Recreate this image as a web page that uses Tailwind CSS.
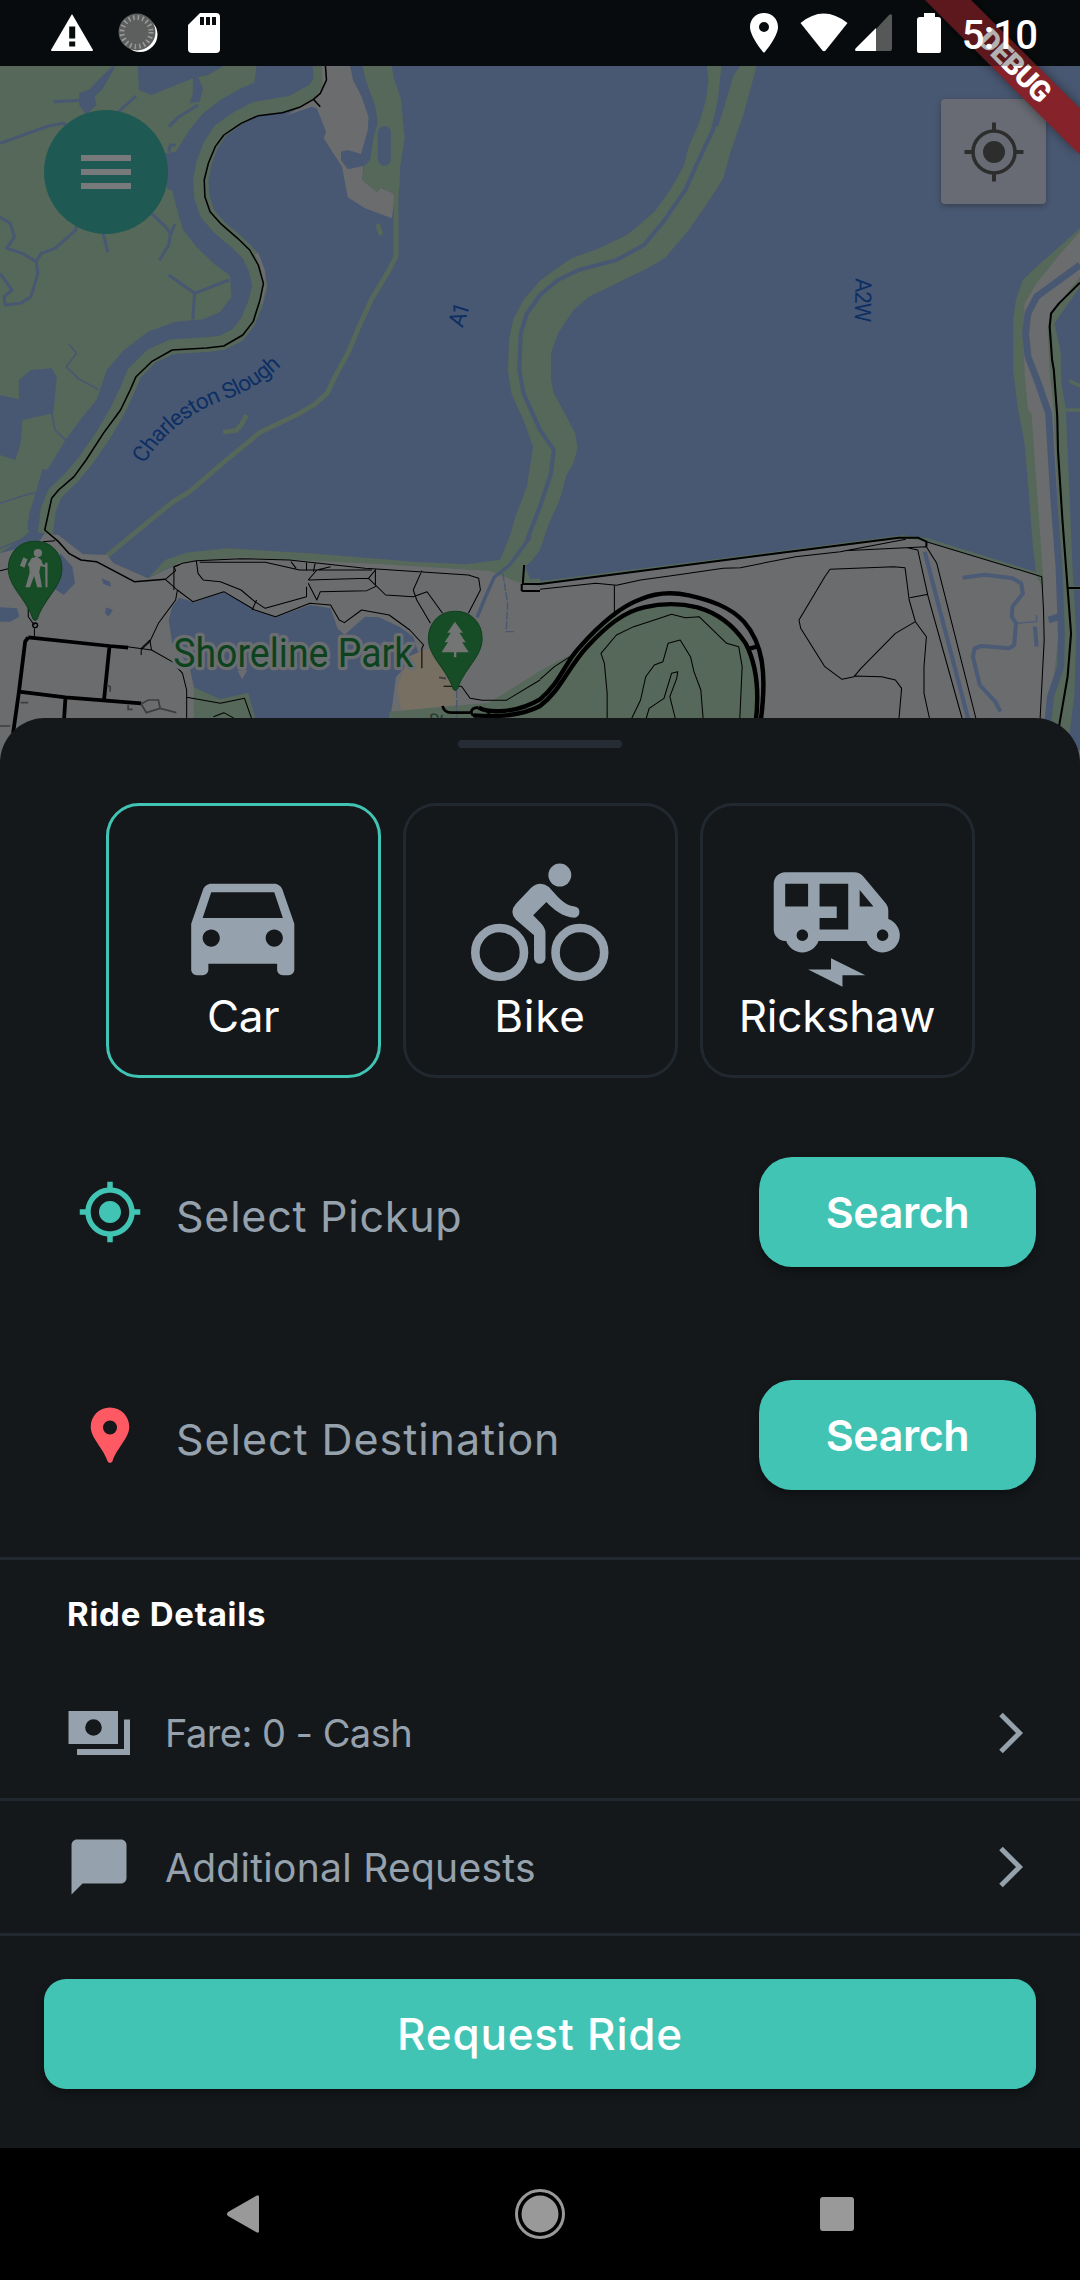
<!DOCTYPE html>
<html lang="en">
<head>
<meta charset="utf-8">
<title>Request Ride</title>
<script src="https://cdn.jsdelivr.net/npm/@tailwindcss/browser@4"></script>
</head>
<body class="bg-black">
<div class="relative flex h-[2280px] w-[1080px] flex-col overflow-hidden bg-[#0c1113] font-['Inter',sans-serif] text-white">

  <!-- Status bar -->
  <header class="relative z-20 flex h-[66px] shrink-0 items-center bg-black/30 pl-[50px]">
    <svg class="h-[40px] w-[44px]" viewBox="0 0 44 40"><path fill="#fff" d="M22 1 43 37q0 1-1 1H2q-1 0-1-1Z"/><path fill="#080c0d" d="M19.2 13.5h6v12h-6zM19.2 28.500h6v5h-6z"/></svg>
    <svg class="ml-[24px] h-[42px] w-[40px]" viewBox="0 0 40 42"><circle cx="22" cy="22.500" r="17.500" fill="#fff"/><circle cx="19" cy="20" r="18.500" fill="#5d5e5e"/><circle cx="18.500" cy="20" r="14.500" fill="none" stroke="#999" stroke-width="5" stroke-dasharray="1.600 3"/></svg>
    <svg class="ml-[30px] h-[42px] w-[32px]" viewBox="0 0 32 42"><path fill="#fff" d="M12 1h16q4 0 4 4v32q0 4-4 4H4q-4 0-4-4V13Z"/><path fill="#080c0d" d="M12 5h4v8h-4zM18 5h4v8h-4zM24 5h4v8h-4z"/></svg>
    <div class="ml-auto flex items-center pr-[43px]">
      <svg class="h-[42px] w-[28px]" viewBox="0 0 28 42"><path fill="#fff" fill-rule="evenodd" d="M14 1C6 1 0 7 0 15c0 10 14 26 14 26s14-16 14-26C28 7 22 1 14 1Zm0 9a5 5 0 1 1 0 10 5 5 0 0 1 0-10Z"/></svg>
      <svg class="ml-[22px] h-[40px] w-[48px]" viewBox="0 0 48 40"><path fill="#fff" d="M.500 10Q23.500-9 47.500 10L26 37q-2 2.500-4 0Z"/></svg>
      <svg class="ml-[7px] h-[40px] w-[38px]" viewBox="0 0 38 40"><path fill="#565857" d="M21 16 34 2q3-2 3 1v33q0 2-2 2H21Z"/><path fill="#fff" d="M21 15v23H1q-2-1 0-3Z"/></svg>
      <svg class="ml-[24px] h-[42px] w-[24px]" viewBox="0 0 24 42"><path fill="#fff" d="M7 1h11v4h3q3 0 3 3v31q0 2-2 2H2q-2 0-2-2V8q0-3 3-3h4Z"/></svg>
      <span class="ml-[21px] pt-[5px] font-['Roboto',sans-serif] text-[40px] leading-none font-medium tracking-[-0.9px]">5:10</span>
    </div>
  </header>

  <!-- Debug ribbon -->
  <svg class="absolute top-0 right-0 z-10 h-[170px] w-[180px]" viewBox="900 0 180 170">
    <defs><filter id="sh" x="-20%" y="-20%" width="140%" height="140%"><feGaussianBlur stdDeviation="6"/></filter></defs>
    <path d="M925 0h46l109 108.500V155Z" fill="#000" opacity=".45" filter="url(#sh)"/>
    <path d="M925 0h46l109 108.500V155Z" fill="#86232a"/>
    <text transform="translate(1015 66) rotate(45)" y="10" text-anchor="middle" textLength="89" font-family="Roboto, sans-serif" font-weight="900" font-size="29" fill="#fff">DEBUG</text>
  </svg>

  <!-- Map -->
  <section class="relative h-[652px] shrink-0">
    <svg class="block h-[700px] w-[1080px]" viewBox="0 198 3136 2100" preserveAspectRatio="none" font-family="Roboto, sans-serif">
      <rect y="198" width="3136" height="2100" fill="#495872"/>
      <!-- marsh -->
      <path fill="#566859" d="M0 198H400L403 270 440 285 560 235 605 225 650 198H745L738 248 690 270 640 300 590 340 550 390 510 455 480 460 485 567 500 572 520 650 532 690 570 740 620 790 668 828 672 890 640 935 590 958 510 965 430 995 360 1050 310 1110 300 1140 280 1200 240 1250 190 1320 120 1440 115 1490 80 1570 85 1600 0 1660Z"/>
      <path fill="#495872" d="M0 1185 55 1198 55 1140 90 1110 150 1105 165 1130 155 1240 65 1260 60 1330 45 1380 0 1365Z"/>
      <path fill="#495872" d="M230 280 260 268 290 235 325 200 335 198 300 265 275 290 280 315 250 345 230 315ZM560 235 575 232 590 265 580 305 550 310 560 280Z"/>
      <g fill="none" stroke="#495872" stroke-width="9" stroke-linejoin="round">
        <path d="M0 430 140 378 185 370 230 420M250 340V300L155 305M395 288 350 330 320 370M575 315 520 350 490 380M0 652 30 670 42 710 20 745 65 760 105 785 110 820 90 890 60 910 15 915 12 890 35 870 0 820M105 785 120 760 160 745 220 690 225 660M300 700 313 757M490 825 565 880 665 840M565 880 560 958M440 640 480 680 495 700 490 735 463 780M508 672 495 705M510 435H495L490 455"/>
        <path stroke-width="5" d="M200 1032 222 1060 192 1100 230 1138 285 1168M150 1240 160 1290 190 1320 215 1350M0 1510 90 1480 110 1480M0 1645 60 1620 105 1580"/>
      </g>
      <path fill="none" stroke="#495872" stroke-width="24" d="M135 1410 110 1500 97 1540 92 1590"/>
      <!-- slough levee -->
      <path fill="none" stroke="#566859" stroke-width="44" stroke-linejoin="round" d="M930 198 933 240 915 270 850 308 740 328 690 355 640 392 612 435 592 490 583 540 586 590 602 640 635 680 690 728 725 765 745 810 755 860 742 910 720 965 690 1005 645 1028 600 1034 500 1040 440 1068 390 1120 370 1170 340 1235 300 1305 250 1380 210 1430 160 1480 140 1530 132 1600"/>
      <path fill="none" stroke="#6b6c6e" stroke-width="10" d="M745 760 764 810 767 860 757 910"/>
      <path fill="#6b6c6e" d="M935 198H1017L1025 240 1050 290 1070 350 1068 390 1048 462 1010 450 990 455 990 480 1010 508 1055 498 1052 540 1095 577 1105 563 1147 582 1138 655 1060 625 1010 592 993 500 940 415 947 395 920 325 905 320 830 347 910 298 937 260Z"/>
      <path fill="#566859" d="M1053 198H1137L1145 240 1165 300 1168 340 1175 415 1162 500 1160 560 1150 640 1147 582 1105 563 1095 577 1052 540 1057 498 1075 480 1085 410 1097 370 1090 320 1062 240ZM1090 675 1102 668 1113 703 1100 708Z"/>
      <rect x="1097" y="378" width="38" height="119" rx="19" fill="#495872"/>
      <path fill="none" stroke="#566859" stroke-width="14" stroke-linejoin="round" d="M1150 560V770L1130 810 1080 895 1040 985 1010 1060 975 1125 950 1180 915 1212 870 1240 755 1297 640 1395 550 1475 500 1507 310 1668M648 1296 685 1292 700 1275 716 1245"/>
      <!-- middle creek -->
      <path fill="#566859" d="M2053 198H2197L2160 340 2120 460 2100 535 2060 600 2000 690 1930 775 1880 805 1780 855 1710 890 1665 930 1620 1000 1600 1060 1600 1140 1608 1180 1640 1240 1670 1300 1677 1345 1665 1390 1645 1425 1625 1500 1590 1580 1568 1650 1530 1700 1500 1760 1400 1740 1350 1693 1450 1685 1480 1610 1500 1540 1530 1460 1548 1340 1520 1260 1485 1180 1475 1110 1478 1020 1490 960 1520 900 1568 842 1610 810 1660 775 1740 745 1820 705 1850 680 1900 635 1940 580 1985 500 2000 440 2030 370 2050 300 2057 240Z"/>
      <path fill="#495872" d="M2095 198H2150L2130 225 2112 290 2085 380H2068L2084 300Z"/>
      <path fill="none" stroke="#495872" stroke-width="12" stroke-linejoin="round" d="M2085 330 2070 390 2020 500 1990 570 1930 660 1870 735 1790 780 1680 810 1620 840 1568 885 1530 940 1512 1000 1508 1110 1520 1180 1568 1290 1608 1350 1600 1420 1568 1520 1530 1620"/>
      <!-- mainland -->
      <path fill="#6b6c6e" d="M0 1660 110 1630 130 1600 170 1605 240 1662 310 1665 330 1690 430 1735 500 1700 540 1670 700 1665 1100 1690 1420 1712 1568 1755 2620 1613 2690 1622 3020 1728 3136 1750V2300H0Z"/>
      <path fill="#566859" d="M430 1735 480 1680 540 1658 660 1645 900 1660 1200 1685 1350 1693 1450 1680 1530 1660 1568 1700V1760L1500 1745 1420 1712 1100 1692 700 1672 520 1688Z"/>
      <path fill="#495872" d="M1525 1700 1568 1660V1735L1540 1738Z"/>
      <path fill="none" stroke="#566859" stroke-width="8" d="M1568 1748 2620 1610 2690 1618 3020 1724"/>
      <path fill="#495872" d="M175 1660 210 1700 218 1750 185 1785 150 1760ZM295 1735 320 1745 322 1760 300 1752ZM308 1822 328 1830 315 1850 305 1840ZM0 1822 50 1825 56 1850 30 1865 0 1865Z"/>
      <path fill="#495872" d="M490 1860 500 1820 520 1793 565 1807 650 1777 700 1805 740 1832 800 1852 900 1815 960 1825 980 1885 1000 1905 1060 1850 1100 1852 1160 1880 1200 1910 1215 1960 1150 2030 1140 2110 1130 2170H745L720 2080 640 2100 565 2070 550 2000 500 1930Z"/>
      <path fill="#6b6c6e" d="M690 2012 718 2010 703 2038Z"/>
      <path fill="#786f63" d="M1245 1945 1185 1970 1155 2060 1165 2132 1330 2115V2060Z"/>
      <path fill="#566859" d="M563 2062 640 2098 720 2078 745 2170H563ZM1130 2135 1420 2108 1568 2013 1660 1962 1780 1850 1880 1822 1990 1815 2080 1845 2160 1920 2190 2000 2200 2170H1130Z"/>
      <path fill="none" stroke="#495872" stroke-width="10" d="M1540 1610 1480 1695 1435 1732 1410 1790 1385 1852"/>
      <path fill="none" stroke="#495872" stroke-width="4" d="M1460 1720 1474 1810 1470 1895H1495M1326 2070V2160" stroke-dasharray="24 5"/>
      <!-- east channel -->
      <path fill="#566859" d="M3136 685 3065 750 3010 800 2970 840 2950 900 2942 960V1110L2955 1220 2975 1330 2985 1450 3000 1650 3010 1730 3050 1800 3050 2250H3136Z"/>
      <path fill="#6b6c6e" d="M3136 695 3080 760 3010 850 2975 910 2970 1000 2976 1130 2985 1230 2995 1240 3020 1600 3030 1750 3010 2250 3045 2160 3075 1900 3077 1650 3060 1230 3048 1120 3042 980 3060 930 3136 830Z"/>
      <path fill="#495872" d="M3136 860 3062 970 3080 1060 3082 1150 3095 1230 3115 1720 3125 1900 3120 2080 3100 2250H3136Z"/>
      <path fill="none" stroke="#566859" stroke-width="10" d="M3092 1230H3136M3105 1142 3136 1158M3110 1764H3136"/>
      <path fill="none" stroke="#495872" stroke-width="20" stroke-linejoin="round" d="M3136 795 3010 890 2985 940 2978 1000 2985 1070 3015 1150 3045 1240 3060 1500 3075 1700 3082 1900 3080 2000 3050 2090 3040 2200M3045 1860 3075 1850"/>
      <g fill="none" stroke="#4c5b75" stroke-width="12" stroke-linejoin="round">
        <path d="M2685 1655 2812 2160M2795 1733 2860 1724 2940 1735 2965 1750 2970 1780 2940 1820 2938 1850 2950 1870 2945 1935 2930 1945 2850 1938 2830 1945 2825 1970 2845 2055 2890 2105 2905 2135M3005 1880 3010 1940"/>
        <path stroke-width="4" d="M2950 1870 3010 1865V1845"/>
      </g>
      <!-- trails -->
      <g fill="none" stroke="#000" stroke-width="3" stroke-linejoin="round">
        <path stroke-width="4.500" d="M945 198 948 240 930 280 910 298 870 322 820 338 750 347 700 370 650 405 625 440 605 490 593 540 595 590 610 635 640 670 690 715 725 750 750 795 765 850 755 900 735 965 705 1005 650 1038 600 1044 500 1050 440 1085 395 1130 378 1170 350 1230 300 1300 250 1380 215 1430 170 1470 150 1495 130 1590 170 1625 200 1660 235 1680 280 1685 390 1745 480 1738M910 298 930 320"/>
        <path d="M125 1625 160 1622M0 1712 30 1705M82 1810V1850L100 1876M100 1885V1910M480 1738 510 1712 505 1700 520 1695M480 1738 515 1770 510 1800 460 1870 435 1925 410 1950V1965M515 1770 560 1805 650 1775 740 1830 800 1850 900 1810 960 1815 985 1860 1000 1868 1050 1830 1130 1845 1190 1890 1230 1935 1225 1945V2005"/>
        <path d="M505 1700 530 1690 570 1682 700 1676 840 1680 1060 1705 1360 1725 1390 1735 1395 1770 1360 1840M570 1682 575 1720 590 1740 640 1745 700 1770 740 1805 770 1825 890 1790 890 1760M505 1700 505 1770M580 1687H770L870 1710H1080M895 1740 920 1710 960 1700M895 1740 1070 1735 1090 1710V1760L1065 1772 930 1775 920 1800 895 1750M1070 1735 1120 1785 1200 1790 1240 1775 1285 1840M1225 1712 1200 1770 1210 1800 1250 1870M845 1685 860 1705M890 1688V1712M915 1690 910 1715M745 1800 732 1830M410 1945 435 1920 440 1950M370 1940 440 1950 500 1985 530 2020 542 2070V2160M542 2092 640 2110 710 2095 732 2160M1288 2059H1340L1365 2095 1400 2101H1470L1568 2040M620 2150 650 2138 680 2155"/>
        <path stroke-width="6" d="M1568 1752 2610 1613 2665 1613 2690 1625 2690 1640"/>
        <path d="M2690 1625 3025 1730 3030 1830 3032 1920 3020 2160" />
        <path d="M1568 1768 1730 1750 1790 1756 1860 1740 1970 1724 2100 1705 2150 1703 2310 1670 2440 1655 2630 1618M1784 1756V1850M2450 1652 2690 1640 2720 1690 2835 2160M2635 1643 2665 1650 2695 1790 2795 2160M2410 1708 2595 1700 2628 1703 2640 1800 2658 1865 2690 1910 2683 2000V2080L2700 2160M2410 1708 2395 1730 2320 1860 2325 1885 2395 2000 2445 2038 2480 2030 2500 2005 2600 1900 2658 1865M2480 2028 2560 2030 2600 2040 2618 2065 2610 2160M2642 1793 2695 1783"/>
        <path d="M1763 2160V2080L1755 1990 1745 1960 1790 1905 1840 1880 1900 1860 1950 1843 1990 1853 2030 1850 2110 1930 2145 1940 2155 2000 2148 2160M1832 2160 1860 2100 1875 2030 1900 1995 1925 1985 1940 1930 1975 1920 2005 1970 2015 2015 2035 2070 2042 2160M1875 2160 1885 2125 1928 2095 1950 2020 1968 2015 1965 2035 1945 2090 1962 2160M1568 2038 1610 2000 1670 1960"/>
        <path stroke-width="6" d="M3136 848 3075 910 3052 940 3048 980 3055 1080 3060 1110 3070 1250 3072 1350 3085 1560 3100 1764 3110 1900 3100 2030 3075 2180M3100 1764H3136M1522 1695 1518 1752H1568M1515 1773H1568M1515 1752V1773"/>
      </g>
      <!-- roads -->
      <g fill="none" stroke="#000" stroke-width="11" stroke-linejoin="round">
        <path d="M82 1912 318 1938 302 2100M82 1912 73 1925 55 2075 38 2200M55 2075 190 2092 410 2110M190 2092 186 2160M318 1938 372 1943"/>
        <path stroke-width="13" d="M1390 2123C1420 2140 1500 2140 1568 2098C1625 2050 1640 1990 1680 1945C1740 1875 1800 1820 1860 1798C1900 1780 1950 1775 2000 1786C2060 1800 2120 1820 2160 1865C2215 1930 2228 2020 2208 2170M1375 2146C1420 2150 1500 2155 1568 2118C1630 2070 1650 2000 1705 1940C1760 1880 1810 1835 1870 1822C1920 1810 1970 1808 2025 1822C2080 1838 2130 1875 2165 1930C2200 2000 2205 2080 2194 2170M2178 1945 2205 1938"/>
        <path stroke-width="8" d="M1390 2123C1365 2122 1360 2145 1385 2150M1410 2130C1425 2138 1420 2148 1405 2150M1285 2118Q1290 2138 1310 2138H1365"/>
      </g>
      <g fill="none" stroke="#3c3d3f" stroke-width="5"><path d="M410 2112 430 2100 460 2100 465 2125 425 2138 410 2112M465 2125 512 2138M372 2115V2128H385M310 2055 320 2060 320 2075M60 2108H82M0 2178H30M1275 2032 1295 2036"/></g>
      <!-- labels -->
      <path id="slough" fill="none" d="M418 1392C480 1290 570 1230 640 1205S760 1150 825 1090"/>
      <g fill="#0d2f64">
        <text font-size="66"><textPath href="#slough" textLength="505">Charleston Slough</textPath></text>
        <text font-size="66" transform="translate(1343 985) rotate(-72)" textLength="72">A1</text>
        <text font-size="66" transform="translate(2484 834) rotate(91)" textLength="132">A2W</text>
      </g>
      <text x="503" y="2002" font-size="122" textLength="697" lengthAdjust="spacingAndGlyphs" fill="#0d421f" stroke="#6b6e70" stroke-width="20" stroke-linejoin="round" paint-order="stroke">Shoreline Park</text>
      <text x="1240" y="2172" font-size="50" fill="#2a3a2d" transform="rotate(14 1240 2172)">Sh</text>
      <!-- place pins -->
      <g fill="#174d26" stroke="#114020" stroke-width="3">
        <path d="M102 1624C55 1624 24 1660 24 1706 24 1760 80 1800 95 1855Q102 1868 109 1855C124 1800 180 1760 180 1706 180 1660 149 1624 102 1624Z"/>
        <path d="M1322 1834C1275 1834 1244 1870 1244 1916 1244 1970 1300 2010 1315 2065Q1322 2078 1329 2065C1344 2010 1400 1970 1400 1916 1400 1870 1369 1834 1322 1834Z"/>
      </g>
      <circle cx="102" cy="1876" r="7" fill="none" stroke="#000" stroke-width="4"/>
      <g fill="#737574">
        <circle cx="110" cy="1659" r="12"/><path d="M92 1674 108 1670 120 1680 124 1693 138 1698V1703L118 1698 114 1715 122 1762H108L99 1728 87 1762H74L86 1718 85 1700 80 1695ZM68 1672 80 1678 71 1703 58 1697ZM131 1688H138V1762H132Z"/>
        <path d="M1321 1865 1344 1898H1334L1352 1927H1342L1361 1957H1325V1972H1318V1957H1282L1301 1927H1291L1309 1898H1299Z"/>
      </g>
    </svg>

    <button class="absolute top-[44px] left-[44px] flex size-[124px] flex-col items-center justify-center gap-[8px] rounded-full bg-[#1f5953]" aria-label="Menu">
      <span class="h-[6px] w-[50px] bg-[#77797a]"></span><span class="h-[6px] w-[50px] bg-[#77797a]"></span><span class="h-[6px] w-[50px] bg-[#77797a]"></span>
    </button>
    <button class="absolute top-[33px] left-[941px] flex size-[105px] items-center justify-center rounded-[4px] bg-[#686b73] shadow-[0_2px_6px_rgba(0,0,0,0.3)]" aria-label="My location">
      <svg class="size-[60px]" viewBox="0 0 60 60"><circle cx="30" cy="30" r="11" fill="#2d2d2d"/><circle cx="30" cy="30" r="21" fill="none" stroke="#2d2d2d" stroke-width="3.500"/><path stroke="#2d2d2d" stroke-width="4" d="M30 .500v9M30 50.500v9M.500 30h9M50.500 30h9"/></svg>
    </button>
  </section>

  <!-- Bottom sheet -->
  <main class="relative flex h-[1430px] shrink-0 flex-col rounded-t-[45px] bg-[#14181b]">
    <div class="mx-auto mt-[22px] h-[8px] w-[164px] shrink-0 rounded-full bg-[#262c33]"></div>

    <div class="mt-[55px] flex justify-center gap-[22px] text-[44px] leading-[54px] text-white">
      <div class="flex size-[275px] flex-col items-center rounded-[33px] border-[3px] border-[#42c4b5] pt-[49px]">
        <svg class="size-[137.5px]" viewBox="0 0 24 24" fill="#95a1ac"><path d="M18.920 6.010C18.720 5.420 18.160 5 17.500 5h-11c-.66 0-1.210.42-1.420 1.010L3 12v8c0 .55.45 1 1 1h1c.55 0 1-.45 1-1v-1h12v1c0 .55.45 1 1 1h1c.55 0 1-.45 1-1v-8l-2.080-5.990zM6.500 16c-.83 0-1.500-.67-1.500-1.500S5.670 13 6.500 13s1.500.67 1.500 1.500S7.330 16 6.500 16zm11 0c-.83 0-1.500-.67-1.500-1.500s.67-1.500 1.500-1.500 1.500.67 1.500 1.500-.67 1.500-1.500 1.500zM5 11l1.500-4.500h11L19 11H5z"/></svg>
        <span class="-mt-[4px] tracking-[-0.4px]">Car</span>
      </div>
      <div class="flex size-[275px] flex-col items-center rounded-[33px] border-[3px] border-[#22282f] pt-[49px]">
        <svg class="size-[137.5px] overflow-visible" viewBox="0 0 24 24" fill="#95a1ac"><circle cx="15.500" cy="3.500" r="2"/><g fill="none" stroke="#95a1ac" stroke-width="1.500"><circle cx="5" cy="17" r="4.250"/><circle cx="19" cy="17" r="4.250"/></g><path d="M13.160 8.200 10.850 10.500 12.300 12Q13 12.800 13 13.600V18a1 1 0 0 1-2 0V14L7.850 11.300Q6.600 9.900 7.850 8.500L10.500 5.700Q12 4.400 13.600 5.600C14.800 6.900 16.200 8.900 18.100 8.970a1 1 0 0 1 0 1.970C16 10.900 14.300 9.400 13.160 8.200Z"/></svg>
        <span class="-mt-[4px] tracking-[0.8px]">Bike</span>
      </div>
      <div class="flex size-[275px] flex-col items-center rounded-[33px] border-[3px] border-[#22282f] pt-[49px]">
        <svg class="size-[137.5px]" viewBox="0 0 24 24" fill="#95a1ac"><path d="M21 11.180V9.720c0-.47-.16-.92-.46-1.280L16.600 3.720C16.220 3.260 15.660 3 15.060 3H3C1.900 3 1 3.900 1 5v8c0 1.100.9 2 2 2h.18C3.600 16.160 4.700 17 6 17s2.400-.84 2.820-2h8.370c.41 1.160 1.510 2 2.820 2 1.660 0 3-1.340 3-3 0-1.300-.85-2.400-2.010-2.820zM18.400 9H16V6.120L18.400 9zM3 5h4v4H3V5zm3 10c-.55 0-1-.45-1-1s.45-1 1-1 1 .45 1 1-.45 1-1 1zm3-2v-2h3V9H9V5h5v8H9zm11 2c-.55 0-1-.45-1-1s.45-1 1-1 1 .45 1 1-.45 1-1 1zM7 20h4v-2l6 3h-4v2z"/></svg>
        <span class="-mt-[4px] tracking-[-0.2px]">Rickshaw</span>
      </div>
    </div>

    <div class="mt-[79px] flex h-[110px] items-center pr-[44px] pl-[77px]">
      <svg class="size-[66px]" viewBox="0 0 24 24" fill="#42c4b5"><path d="M12 8c-2.210 0-4 1.790-4 4s1.790 4 4 4 4-1.790 4-4-1.790-4-4-4zm8.940 3c-.46-4.170-3.770-7.480-7.940-7.940V1h-2v2.060C6.830 3.520 3.520 6.830 3.060 11H1v2h2.060c.46 4.170 3.770 7.480 7.940 7.940V23h2v-2.060c4.170-.46 7.480-3.770 7.940-7.940H23v-2h-2.060zM12 19c-3.870 0-7-3.130-7-7s3.130-7 7-7 7 3.130 7 7-3.130 7-7 7z"/></svg>
      <span class="ml-[33px] pt-[7px] text-[43px] leading-[54px] tracking-[0.75px] text-[#95a1ac]">Select Pickup</span>
      <button class="ml-auto h-[110px] w-[277px] rounded-[33px] bg-[#42c4b5] text-[43px] font-semibold tracking-[-0.4px] shadow-[0_5px_8px_rgba(0,0,0,0.3)]">Search</button>
    </div>
    <div class="mt-[113px] flex h-[110px] items-center pr-[44px] pl-[77px]">
      <svg class="size-[66px]" viewBox="0 0 24 24" fill="#ff5963"><path fill-rule="evenodd" d="M12 2C8.100 2 5 5.100 5 9c0 4.200 4.400 7.500 6.100 12.500q.9 1.300 1.800 0C14.600 16.500 19 13.200 19 9c0-3.900-3.100-7-7-7Zm0 4.700a2.550 2.550 0 1 1 0 5.100 2.550 2.550 0 0 1 0-5.100Z"/></svg>
      <span class="ml-[33px] pt-[7px] text-[43px] leading-[54px] tracking-[0.95px] text-[#95a1ac]">Select Destination</span>
      <button class="ml-auto h-[110px] w-[277px] rounded-[33px] bg-[#42c4b5] text-[43px] font-semibold tracking-[-0.4px] shadow-[0_5px_8px_rgba(0,0,0,0.3)]">Search</button>
    </div>

    <section class="mt-[67px] border-t-[3px] border-[#22282f]">
      <h2 class="pt-[33px] pl-[67px] text-[33px] leading-[42px] font-bold tracking-[0.75px]">Ride Details</h2>
      <div class="mt-[33px] flex h-[130px] items-center pr-[56px] pl-[66px] text-[38px] text-[#95a1ac]">
        <svg class="size-[66px]" viewBox="0 0 66 66" fill="#95a1ac"><path fill-rule="evenodd" d="M2.500 11H52v33H2.500ZM27.500 19.200a8.300 8.300 0 1 0 0 16.600 8.300 8.300 0 0 0 0-16.600ZM58 19.500h6V55H11v-6h47Z"/></svg>
        <span class="ml-[33px] tracking-[-0.55px]">Fare: 0 - Cash</span>
        <svg class="ml-auto h-[42px] w-[25px]" viewBox="0 0 25 42" fill="none" stroke="#95a1ac" stroke-width="5"><path d="M2 2.500 20.500 21 2 39.500"/></svg>
      </div>
    </section>
    <div class="flex h-[138px] shrink-0 items-center border-y-[3px] border-[#22282f] pr-[56px] pl-[66px] text-[39px] text-[#95a1ac]">
      <svg class="size-[66px]" viewBox="0 0 24 24" fill="#95a1ac"><path d="M20 2H4c-1.100 0-1.990.9-1.990 2L2 22l4-4h14c1.100 0 2-.9 2-2V4c0-1.100-.9-2-2-2z"/></svg>
      <span class="ml-[33px] pt-[2px] tracking-[0.28px]">Additional Requests</span>
      <svg class="ml-auto h-[42px] w-[25px]" viewBox="0 0 25 42" fill="none" stroke="#95a1ac" stroke-width="5"><path d="M2 2.500 20.500 21 2 39.500"/></svg>
    </div>
    <button class="mx-[44px] mt-[43px] h-[110px] shrink-0 rounded-[22px] bg-[#42c4b5] text-[44px] font-medium tracking-[0.8px] shadow-[0_5px_8px_rgba(0,0,0,0.3)]">Request Ride</button>
  </main>

  <!-- Navigation bar -->
  <nav class="flex h-[132px] shrink-0 items-center justify-between bg-black pr-[226px] pl-[227px]">
    <svg class="h-[38px] w-[32px]" viewBox="0 0 32 38" fill="#999"><path d="M29 1q3-2 3 1v34q0 3-3 1L1 21q-2-2 0-4Z"/></svg>
    <svg class="size-[50px]" viewBox="0 0 50 50"><circle cx="25" cy="25" r="23.500" fill="none" stroke="#999" stroke-width="3"/><circle cx="25" cy="25" r="18.500" fill="#999"/></svg>
    <span class="size-[34px] rounded-[3px] bg-[#999]"></span>
  </nav>
</div>
</body>
</html>
